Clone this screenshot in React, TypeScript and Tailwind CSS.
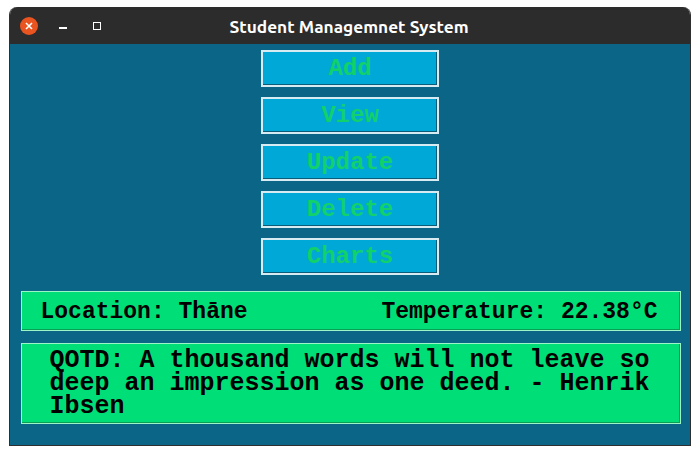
import React from "react";

const buttons = ["Add", "View", "Update", "Delete", "Charts"];

export default function App() {
  return (
    <div className="w-[700px] h-[455px] bg-white pt-[7px] pl-[9px]">
      <div className="w-[682px] h-[439px] flex flex-col rounded-t-[8px] overflow-hidden border border-[#2f2f2f] border-t-0">
        {/* title bar */}
        <div className="h-[37px] bg-[#2c2c2c] flex items-center relative shrink-0">
          <div className="absolute left-[10px] top-[10px] w-[18px] h-[18px] rounded-full bg-[#e95420] flex items-center justify-center">
            <svg width="10" height="10" viewBox="0 0 10 10">
              <path d="M2 2 L8 8 M8 2 L2 8" stroke="#fff" strokeWidth="1.6" />
            </svg>
          </div>
          <div className="absolute left-[49px] top-[20px] w-[8px] h-[1.5px] bg-white" />
          <div className="absolute left-[83px] top-[15px] w-[8px] h-[8px] border border-white" />
          <div
            className="w-full text-center text-white font-bold text-[17.3px] pt-[2px] pr-[2px]"
            style={{ fontFamily: "Ubuntu, 'Noto Sans', sans-serif" }}
          >
            Student Managemnet System
          </div>
        </div>

        {/* body */}
        <div className="flex-1 bg-[#0a6587] flex flex-col items-center pt-[6px]">
          <div className="flex flex-col gap-[10px]">
            {buttons.map((b) => (
              <div
                key={b}
                className="w-[178px] h-[37px] bg-[#00a8d8] border-2 border-[#d6ecf2] shadow-[inset_-1px_-1px_0_#0c5c78] flex items-center justify-center pt-[1px] text-[#12d06a] font-bold text-[24px] leading-none"
                style={{ fontFamily: "'Liberation Mono', monospace" }}
              >
                {b}
              </div>
            ))}
          </div>

          <div
            className="mt-[16px] ml-[1px] w-[660px] h-[40px] bg-[#00de78] border border-[#9cf5c6] shadow-[inset_-1px_-1px_0_#07a055] flex items-center justify-between pl-[19px] pr-[22px] pt-[2px] text-black font-bold text-[23px] leading-none"
            style={{ fontFamily: "'Liberation Mono', monospace" }}
          >
            <span>Location: Thāne</span>
            <span>Temperature: 22.38°C</span>
          </div>

          <div
            className="mt-[12px] ml-[1px] w-[660px] h-[81px] bg-[#00de78] border border-[#9cf5c6] shadow-[inset_-1px_-1px_0_#07a055] pl-[28px] pt-[5px] text-black font-bold text-[25px] leading-[23px]"
            style={{ fontFamily: "'Liberation Mono', monospace" }}
          >
            <p className="w-[615px]">
              QOTD: A thousand words will not leave so deep an impression as one deed. - Henrik Ibsen
            </p>
          </div>
        </div>
      </div>
    </div>
  );
}
